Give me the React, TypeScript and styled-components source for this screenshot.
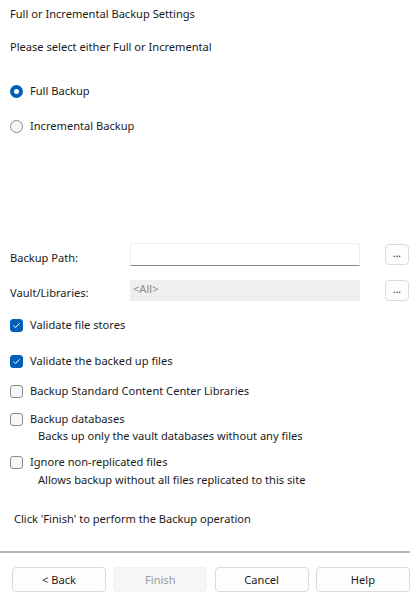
import styled, { createGlobalStyle } from 'styled-components';

const GlobalStyle = createGlobalStyle`
  html, body {
    margin: 0;
    padding: 0;
    background: #ffffff;
  }
  body {
    font-family: 'Segoe UI', 'Noto Sans', 'Open Sans', sans-serif;
    font-size: 11.1px;
    color: #1a1a1a;
  }
`

const Page = styled.div`
  width: 410px;
  height: 596px;
  display: flex;
  flex-direction: column;
  box-sizing: border-box;
`

const Content = styled.div`
  padding: 6px 1px 0 10px;
  display: flex;
  flex-direction: column;
`

const Line = styled.div<{ $top: number; $indent?: number }>`
  height: 16px;
  line-height: 16px;
  margin-top: ${p => p.$top}px;
  padding-left: ${p => p.$indent ?? 0}px;
  white-space: nowrap;
`

const OptionRow = styled.label<{ $top: number }>`
  display: flex;
  align-items: center;
  gap: 7px;
  height: 16px;
  line-height: 16px;
  margin-top: ${p => p.$top}px;
  white-space: nowrap;
`

const RadioDot = styled.span<{ $on?: boolean }>`
  width: 13px;
  height: 13px;
  box-sizing: border-box;
  border-radius: 50%;
  flex: none;
  background: ${p => (p.$on ? '#ffffff' : '#f6f6f6')};
  border: ${p => (p.$on ? '4px solid #005fb8' : '1px solid #8b8b8b')};
`

const Box = styled.span<{ $on?: boolean }>`
  width: 13px;
  height: 13px;
  box-sizing: border-box;
  border-radius: 3px;
  flex: none;
  display: flex;
  align-items: center;
  justify-content: center;
  background: ${p => (p.$on ? '#005fb8' : '#f6f6f6')};
  border: 1px solid ${p => (p.$on ? '#005fb8' : '#8b8b8b')};
`

const FieldGrid = styled.div`
  margin-top: 109px;
  display: grid;
  grid-template-columns: 120px 230px 1fr;
  row-gap: 14px;
  align-items: center;
`

const FieldLabel = styled.div`
  line-height: 16px;
  align-self: end;
`

const PathInput = styled.div`
  height: 23px;
  box-sizing: border-box;
  background: #ffffff;
  border: 1px solid #efefef;
  border-bottom: 1px solid #8a8a8a;
  border-radius: 3px 3px 0 0;
`

const ReadOnlyInput = styled.div`
  height: 21px;
  box-sizing: border-box;
  background: #efefef;
  color: #8a8a8a;
  padding: 0 3px;
  line-height: 17px;
`

const DotsButton = styled.button`
  justify-self: end;
  height: 21px;
  width: 24px;
  box-sizing: border-box;
  border: 1px solid #dcdcdc;
  border-radius: 4px;
  background: #fdfdfd;
  font-family: inherit;
  font-size: 10px;
  color: #1a1a1a;
  padding: 0 0 4px;
  line-height: 1;
`

const Footer = styled.div`
  margin-top: auto;
  padding-bottom: 4px;
`

const Separator = styled.div`
  height: 2px;
  background: #a0a0a0;
  opacity: 0.8;
`

const ButtonBar = styled.div`
  margin-top: 14px;
  display: grid;
  grid-template-columns: repeat(4, 94px);
  column-gap: 7.3px;
  padding-left: 12px;
`

const ActionButton = styled.button<{ $disabled?: boolean }>`
  height: 25px;
  box-sizing: border-box;
  border-radius: 4px;
  font-family: inherit;
  font-size: 11.1px;
  border: 1px solid ${p => (p.$disabled ? '#f2f2f2' : '#dadada')};
  background: ${p => (p.$disabled ? '#f6f6f6' : '#fdfdfd')};
  color: ${p => (p.$disabled ? '#9a9a9a' : '#1a1a1a')};
  padding: 0;
`

function Check() {
  return (
    <svg width="9" height="9" viewBox="0 0 9 9">
      <path d="M1.8 4.8 L3.6 6.5 L7.2 2.6" fill="none" stroke="#ffffff" strokeWidth="1" strokeLinecap="round" strokeLinejoin="round" />
    </svg>
  )
}

function CheckOption({ top, on, label }: { top: number; on?: boolean; label: string }) {
  return (
    <OptionRow $top={top}>
      <Box $on={on}>{on && <Check />}</Box>
      {label}
    </OptionRow>
  )
}

export default function App() {
  return (
    <>
      <GlobalStyle />
      <Page>
        <Content>
          <Line $top={0}>Full or Incremental Backup Settings</Line>
          <Line $top={17}>Please select either Full or Incremental</Line>

          <OptionRow $top={28}>
            <RadioDot $on />
            Full Backup
          </OptionRow>
          <OptionRow $top={19}>
            <RadioDot />
            Incremental Backup
          </OptionRow>

          <FieldGrid>
            <FieldLabel>Backup Path:</FieldLabel>
            <PathInput />
            <DotsButton>...</DotsButton>
            <FieldLabel>Vault/Libraries:</FieldLabel>
            <ReadOnlyInput>&lt;All&gt;</ReadOnlyInput>
            <DotsButton>...</DotsButton>
          </FieldGrid>

          <CheckOption top={16} on label="Validate file stores" />
          <CheckOption top={20} on label="Validate the backed up files" />
          <CheckOption top={14} label="Backup Standard Content Center Libraries" />
          <CheckOption top={12} label="Backup databases" />
          <Line $top={1} $indent={28}>Backs up only the vault databases without any files</Line>
          <CheckOption top={10} label="Ignore non-replicated files" />
          <Line $top={2} $indent={28}>Allows backup without all files replicated to this site</Line>

          <Line $top={23} $indent={4}>Click 'Finish' to perform the Backup operation</Line>
        </Content>

        <Footer>
          <Separator />
          <ButtonBar>
            <ActionButton>&lt; Back</ActionButton>
            <ActionButton $disabled>Finish</ActionButton>
            <ActionButton>Cancel</ActionButton>
            <ActionButton>Help</ActionButton>
          </ButtonBar>
        </Footer>
      </Page>
    </>
  )
}
